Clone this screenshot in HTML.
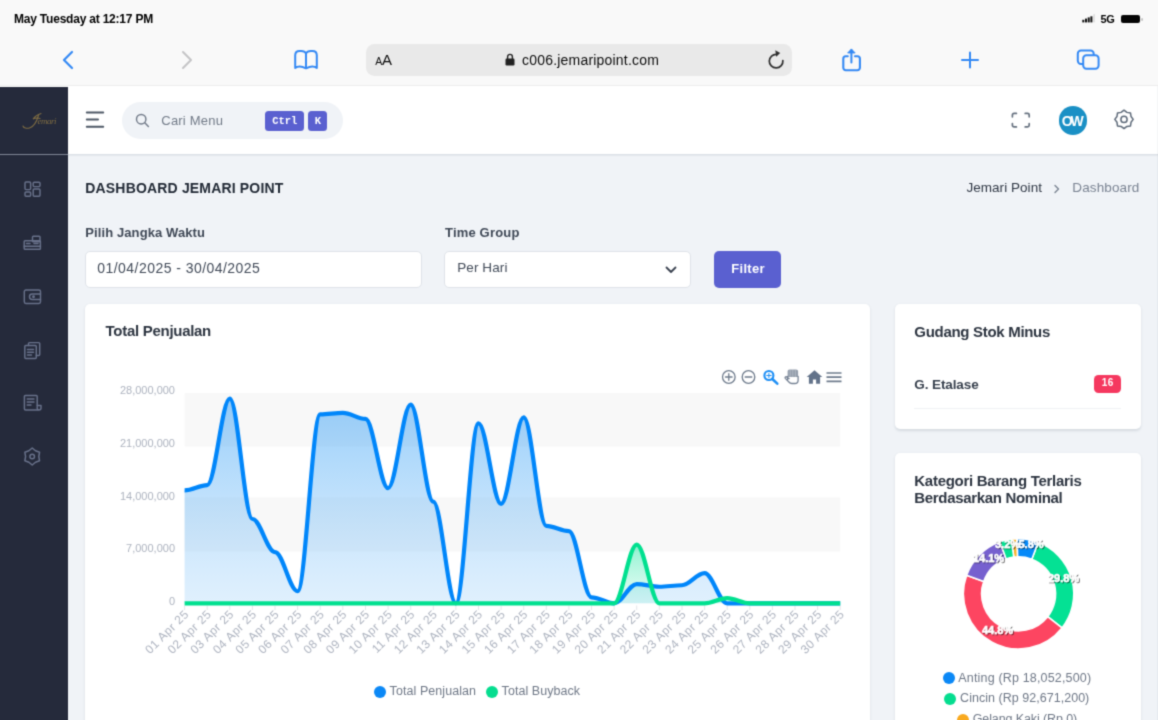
<!DOCTYPE html>
<html lang="id">
<head>
<meta charset="utf-8">
<title>Dashboard Jemari Point</title>
<style>
*{box-sizing:border-box;margin:0;padding:0}
html,body{width:1158px;height:720px;overflow:hidden;background:#f0f3f7;font-family:"Liberation Sans",sans-serif;color:#313a46}
#pg{position:absolute;left:-20px;top:-20px;width:1198px;height:760px;overflow:hidden;background:#f0f3f7;filter:url(#soft)}
#in{position:absolute;left:20px;top:20px;width:1158px;height:720px}
.abs{position:absolute}
.t{position:absolute;white-space:nowrap;line-height:1}
#status{left:-20px;top:-20px;width:1198px;height:105.5px;background:#f9f9f9;border-bottom:1px solid #efefef}
#url{left:365.5px;top:44px;width:426.5px;height:31.800px;border-radius:8.500px;background:#e9e9e9}
#side{left:-20px;top:87px;width:87.8px;height:660px;background:#252a3b}
#sideline{left:-20px;top:153.6px;width:87.8px;height:1.4px;background:#7e8494}
#head{left:-20px;top:85.5px;width:1198px;height:68.5px;background:#fff;box-shadow:0 1px 2px rgba(120,130,150,.25)}
#search{left:122px;top:102px;width:221px;height:37px;border-radius:18.5px;background:#f0f3f7}
.kbd{position:absolute;top:110.5px;height:20px;border-radius:3.5px;background:#5a60d0;color:#fff;font-family:"Liberation Mono",monospace;font-weight:700;font-size:10.5px;line-height:20px;text-align:center}
.inp{position:absolute;background:#fff;border:1px solid #dfe3e9;border-radius:5px}
.card{position:absolute;background:#fff;border-radius:5px;box-shadow:0 1.5px 2.5px rgba(125,135,150,.22)}
#btn{left:713.7px;top:251px;width:67.7px;height:37px;border-radius:5px;background:#5a60d0}
#avatar{left:1058.6px;top:105.8px;width:28.8px;height:28.8px;border-radius:50%;background:#1a90c5}
#badge{left:1093.7px;top:374.8px;width:27px;height:17.8px;border-radius:4.5px;background:#f5385f}
</style>
</head>
<body><svg width="0" height="0" style="position:absolute"><defs><filter id="soft" x="0" y="0" width="100%" height="100%" color-interpolation-filters="sRGB"><feConvolveMatrix order="3" kernelMatrix="0.02768 0.11101 0.02768 0.11101 0.44521 0.11101 0.02768 0.11101 0.02768" divisor="1" edgeMode="duplicate" preserveAlpha="true"/></filter></defs></svg><div id="pg"><div id="in">
<!-- browser chrome -->
<div class="abs" id="status"></div>
<div class="t" style="left:14px;top:12.8px;font-size:12px;font-weight:700;color:#000;letter-spacing:-0.21px">May Tuesday at 12:17 PM</div>
<div class="t" style="left:1100.4px;top:14.3px;font-size:11px;font-weight:700;color:#000;letter-spacing:-0.3px">5G</div>
<div class="abs" style="left:1120.5px;top:15.3px;width:19.4px;height:7.4px;border-radius:2px;background:#050505"></div>
<div class="abs" style="left:1141.3px;top:17.5px;width:1.6px;height:3px;border-radius:1px;background:#c4c4c4"></div>
<svg class="abs" style="left:1082px;top:13px" width="14" height="11" viewBox="0 0 14 11"><rect x="0.3" y="6.800" width="2" height="2.600" fill="#111"/><rect x="3" y="5.600" width="2" height="3.800" fill="#111"/><rect x="5.700" y="4.400" width="2" height="5" fill="#111"/><rect x="8.400" y="3.300" width="2" height="6.100" fill="#111"/><rect x="11.400" y="1.200" width="1.400" height="8.200" fill="#d8d8d8"/></svg>

<div class="abs" id="url"></div>
<div class="t" style="left:375.2px;top:52px;font-size:15px;color:#0c0c0c;letter-spacing:-0.3px"><span style="font-size:10.5px">A</span><span style="font-size:15px">A</span></div>
<svg class="abs" style="left:505px;top:53px" width="10" height="13" viewBox="0 0 10 13"><rect x="0.5" y="5.5" width="9" height="7" rx="1.2" fill="#222"/><path d="M2.6 6V3.8a2.4 2.4 0 0 1 4.8 0V6" fill="none" stroke="#222" stroke-width="1.4"/></svg>
<div class="t" style="left:522px;top:52.5px;font-size:14px;color:#0c0c0c;letter-spacing:0.2px">c006.jemaripoint.com</div>
<svg class="abs" style="left:767px;top:49px" width="20" height="22" viewBox="0 0 20 22"><path d="M15.870 11.500A6.800 6.800 0 1 1 9.690 5.330" fill="none" stroke="#2e2e2e" stroke-width="1.700" stroke-linecap="round"/><path d="M8.300 1.200l4.900 2.900-4 3.700z" fill="#2e2e2e"/></svg>
<!-- toolbar icons -->
<svg class="abs" style="left:61px;top:50px" width="14" height="20" viewBox="0 0 14 20"><path d="M11 2L3 10l8 8" fill="none" stroke="#3489f4" stroke-width="2.200" stroke-linecap="round" stroke-linejoin="round"/></svg>
<svg class="abs" style="left:180px;top:50px" width="14" height="20" viewBox="0 0 14 20"><path d="M3 2l8 8-8 8" fill="none" stroke="#c4c4c6" stroke-width="2" stroke-linecap="round" stroke-linejoin="round"/></svg>
<svg class="abs" style="left:292px;top:48px" width="28" height="24" viewBox="0 0 28 24"><path d="M3.2 20V7.300C3.200 4.300 5 2.900 7.600 2.900H9.200C11.400 2.900 13.200 3.800 14 5.400C14.800 3.800 16.600 2.900 18.800 2.900H20.400C23 2.900 24.800 4.300 24.800 7.300V20M14 5.400V20.300M3.200 20C5.500 18.200 9.500 18 14 20.300C18.500 18 22.500 18.200 24.800 20" fill="none" stroke="#3489f4" stroke-width="2" stroke-linejoin="round" stroke-linecap="round"/></svg>
<svg class="abs" style="left:839px;top:46px" width="26" height="28" viewBox="0 0 26 28"><path d="M8.800 10.300H6.800a2.500 2.500 0 0 0-2.500 2.500V21.800a2.500 2.500 0 0 0 2.500 2.500H18.400a2.500 2.500 0 0 0 2.500-2.500V12.800a2.500 2.500 0 0 0-2.500-2.500H16" fill="none" stroke="#3489f4" stroke-width="2.100" stroke-linecap="round"/><path d="M12.400 16.500V4.200" fill="none" stroke="#3489f4" stroke-width="2" stroke-linecap="round"/><path d="M8.600 7l3.800-4.100 3.800 4.100z" fill="#3489f4" stroke="#3489f4" stroke-width="0.800" stroke-linejoin="round"/></svg>
<svg class="abs" style="left:958.5px;top:49px" width="22" height="22" viewBox="0 0 22 22"><path d="M11 3.400v15.200M3 11h16" fill="none" stroke="#3489f4" stroke-width="2" stroke-linecap="round"/></svg>
<svg class="abs" style="left:1075px;top:48px" width="26" height="26" viewBox="0 0 26 26"><rect x="2.800" y="2.600" width="15.900" height="13.300" rx="3.200" fill="none" stroke="#3489f4" stroke-width="2"/><rect x="8.200" y="7.300" width="15.400" height="13.500" rx="3.200" fill="#f9f9f9" stroke="#3489f4" stroke-width="2"/></svg>

<!-- sidebar -->
<div class="abs" id="head"></div>
<div class="abs" id="side"></div>
<div class="abs" id="sideline"></div>
<svg class="abs" style="left:20px;top:110px" width="40" height="22" viewBox="0 0 40 22"><path d="M21 3.500c-3.500 1-6.500 3.500-8 5.500 2-1 5-1.200 7-0.500M18.500 5.500c-1.500 5-4 11-9 12.500-3 0.900-6-0.300-6.500-2" fill="none" stroke="#9b8145" stroke-width="1.1" stroke-linecap="round" opacity="0.75"/><text x="17.500" y="13.800" font-family="Liberation Serif, serif" font-style="italic" font-size="9" fill="#9b8145" opacity="0.75" letter-spacing="-0.5">emari</text></svg>

<svg class="abs" style="left:23px;top:180px" width="19" height="18" viewBox="0 0 19 18" stroke="#68718a" stroke-width="1.45" fill="none" stroke-linejoin="round" stroke-linecap="round"><rect x="2" y="2" width="5.600" height="7.600" rx="1"/><rect x="10.200" y="2.200" width="6.800" height="4.400" rx="1"/><rect x="2" y="12" width="5.600" height="4.200" rx="1"/><rect x="10.200" y="9" width="6.800" height="7.200" rx="1"/></svg>
<svg class="abs" style="left:23px;top:234px" width="19" height="18" viewBox="0 0 19 18" stroke="#68718a" stroke-width="1.45" fill="none" stroke-linejoin="round" stroke-linecap="round"><rect x="9.500" y="2.200" width="7.500" height="5.500" rx="0.800"/><rect x="1.200" y="6.800" width="16.200" height="8.400" rx="0.800"/><path d="M1.200 12.200h16.200M3.500 9.500h3.500M11 9.500h4"/></svg>
<svg class="abs" style="left:23px;top:288px" width="19" height="18" viewBox="0 0 19 18" stroke="#68718a" stroke-width="1.45" fill="none" stroke-linejoin="round" stroke-linecap="round"><rect x="1.300" y="2" width="16.200" height="13.400" rx="1.600"/><path d="M17.500 6H9.200a2.700 2.700 0 0 0 0 5.400h8.300"/><circle cx="10.500" cy="8.700" r="0.700" fill="#68718a"/></svg>
<svg class="abs" style="left:23px;top:341px" width="19" height="19" viewBox="0 0 19 19" stroke="#68718a" stroke-width="1.45" fill="none" stroke-linejoin="round" stroke-linecap="round"><path d="M5.500 4.500V2.600a1 1 0 0 1 1-1h9.200a1 1 0 0 1 1 1v10.800a1 1 0 0 1-1 1h-2.400"/><rect x="1.800" y="4.500" width="11.500" height="13" rx="1"/><path d="M4.500 8.500h6M4.500 11.200h6M4.500 13.900h4"/></svg>
<svg class="abs" style="left:23px;top:394px" width="20" height="18" viewBox="0 0 20 18" stroke="#68718a" stroke-width="1.45" fill="none" stroke-linejoin="round" stroke-linecap="round"><path d="M14.200 11.500V2.500a1 1 0 0 0-1-1H2.400a1 1 0 0 0-1 1v12.300a1.200 1.200 0 0 0 1.200 1.200H16a2 2 0 0 0 2-2v-2.500h-4M14.200 11.500v2.300a1.900 1.900 0 0 0 1.800 2.200"/><path d="M4.200 5h6.800M4.200 8h6.800M4.200 11h3.800"/></svg>
<svg class="abs" style="left:23px;top:447px" width="19" height="19" viewBox="0 0 19 19" stroke="#68718a" stroke-width="1.45" fill="none" stroke-linejoin="round" stroke-linecap="round"><path d="M9.20 1.00 L12.50 3.78 L16.56 5.25 L15.80 9.50 L16.56 13.75 L12.50 15.22 L9.20 18.00 L5.90 15.22 L1.84 13.75 L2.60 9.50 L1.84 5.25 L5.90 3.78Z"/><circle cx="9.2" cy="9.5" r="2.3"/></svg>


<!-- header -->
<svg class="abs" style="left:85px;top:111px" width="22" height="18" viewBox="0 0 22 18"><path d="M1.8 1.600h16.400M1.800 8.600h11.200M1.800 15.700h16.400" fill="none" stroke="#4c5765" stroke-width="2" stroke-linecap="round"/></svg>
<div class="abs" id="search"></div>
<svg class="abs" style="left:135px;top:113px" width="15" height="15" viewBox="0 0 15 15"><circle cx="6.200" cy="6.200" r="4.700" fill="none" stroke="#727b89" stroke-width="1.45"/><path d="M9.800 9.800l3.600 3.600" stroke="#727b89" stroke-width="1.45" stroke-linecap="round"/></svg>
<div class="t" style="left:161.3px;top:113.5px;font-size:13px;color:#727b88;letter-spacing:0.2px">Cari Menu</div>
<div class="kbd" style="left:265.3px;width:39px">Ctrl</div>
<div class="kbd" style="left:308.4px;width:19px">K</div>
<svg class="abs" style="left:1011px;top:111.500px" width="20" height="17" viewBox="0 0 20 17"><path d="M1.400 4.800V3A1.600 1.600 0 0 1 3 1.400h2.400M14.200 1.400h2.400A1.600 1.600 0 0 1 18.200 3v1.800M18.200 11.500v1.800a1.600 1.600 0 0 1-1.600 1.600h-2.400M5.400 14.900H3a1.600 1.600 0 0 1-1.600-1.600v-1.800" fill="none" stroke="#66717f" stroke-width="1.700" stroke-linecap="round"/></svg>
<div class="abs" id="avatar"></div>
<div class="t" style="left:1061.8px;top:113.9px;font-size:14px;font-weight:700;color:#fff;letter-spacing:-2.3px">OW</div>
<svg class="abs" style="left:1113.7px;top:109.1px" width="20" height="21" viewBox="0 0 20 21"><path d="M10.00 1.20 L12.91 3.38 L16.51 3.89 L17.02 7.49 L19.20 10.40 L17.02 13.31 L16.51 16.91 L12.91 17.42 L10.00 19.60 L7.09 17.42 L3.49 16.91 L2.98 13.31 L0.80 10.40 L2.98 7.49 L3.49 3.89 L7.09 3.38Z" fill="none" stroke="#5f6b7a" stroke-width="1.5" stroke-linejoin="round"/><circle cx="10" cy="10.4" r="3.1" fill="none" stroke="#5f6b7a" stroke-width="1.5"/></svg>

<!-- page title / breadcrumb -->
<div class="t" style="left:85.3px;top:180.5px;font-size:14px;font-weight:700;color:#222a36;letter-spacing:0.17px">DASHBOARD JEMARI POINT</div>
<div class="t" style="left:966.4px;top:181.2px;font-size:13.5px;color:#303845;letter-spacing:0.05px">Jemari Point</div>
<svg class="abs" style="left:1053px;top:184px" width="8" height="10" viewBox="0 0 8 10"><path d="M2 1.500L5.500 5 2 8.500" fill="none" stroke="#7a8392" stroke-width="1.4" stroke-linecap="round" stroke-linejoin="round"/></svg>
<div class="t" style="left:1072.3px;top:181.2px;font-size:13.5px;color:#7a8392;letter-spacing:0.12px">Dashboard</div>

<!-- filter form -->
<div class="t" style="left:85.3px;top:226.1px;font-size:13px;font-weight:700;color:#3f4856;letter-spacing:0.1px">Pilih Jangka Waktu</div>
<div class="inp" style="left:85px;top:251px;width:337px;height:37px"></div>
<div class="t" style="left:97.3px;top:261.2px;font-size:14px;color:#424b59;letter-spacing:0.45px">01/04/2025 - 30/04/2025</div>
<div class="t" style="left:445px;top:226.1px;font-size:13px;font-weight:700;color:#3f4856;letter-spacing:0.18px">Time Group</div>
<div class="inp" style="left:444px;top:251px;width:247px;height:37px"></div>
<div class="t" style="left:457.2px;top:261.3px;font-size:13.5px;color:#424b59;letter-spacing:0.1px">Per Hari</div>
<svg class="abs" style="left:665px;top:266px" width="12" height="8" viewBox="0 0 12 8"><path d="M1.500 1.500L6 6l4.500-4.500" fill="none" stroke="#3a4250" stroke-width="1.800" stroke-linecap="round" stroke-linejoin="round"/></svg>
<div class="abs" id="btn"></div>
<div class="t" style="left:731.3px;top:261.8px;font-size:13px;font-weight:700;color:#fff;letter-spacing:0.3px">Filter</div>

<!-- cards -->
<div class="card" style="left:85px;top:304px;width:785.2px;height:460px"></div>
<div class="card" style="left:894.5px;top:304px;width:246px;height:124.5px"></div>
<div class="card" style="left:894.5px;top:453px;width:246px;height:310px"></div>
<div class="t" style="left:105.6px;top:323.4px;font-size:15px;font-weight:700;color:#2d3541;letter-spacing:-0.29px">Total Penjualan</div>
<div class="t" style="left:914.3px;top:323.9px;font-size:15px;font-weight:700;color:#2d3541;letter-spacing:-0.3px">Gudang Stok Minus</div>
<div class="t" style="left:914.3px;top:378.4px;font-size:13.5px;font-weight:700;color:#38414e;letter-spacing:-0.1px">G. Etalase</div>
<div class="abs" id="badge"></div>
<div class="t" style="left:1101.8px;top:378.3px;font-size:10px;font-weight:700;color:#fff;letter-spacing:0.5px">16</div>
<div class="abs" style="left:914px;top:408px;width:207px;height:1px;background:#f0f2f5"></div>
<div class="t" style="left:914.3px;top:472.7px;font-size:15px;font-weight:700;color:#2d3541;letter-spacing:-0.28px">Kategori Barang Terlaris</div>
<div class="t" style="left:914.3px;top:490.1px;font-size:15px;font-weight:700;color:#2d3541;letter-spacing:-0.32px">Berdasarkan Nominal</div>


<svg class="abs" style="left:0;top:0" width="1158" height="720" viewBox="0 0 1158 720">
<defs>
<linearGradient id="gb" x1="0" y1="0" x2="0" y2="1"><stop offset="0" stop-color="#2296f5" stop-opacity="0.47"/><stop offset="1" stop-color="#8cc8f8" stop-opacity="0.27"/></linearGradient>
<linearGradient id="gg" x1="0" y1="0" x2="0" y2="1"><stop offset="0" stop-color="#00e396" stop-opacity="0.45"/><stop offset="1" stop-color="#7ff0ca" stop-opacity="0.2"/></linearGradient>
</defs>
<rect x="184.6" y="393.1" width="655.6" height="53.5" fill="#f8f8f8"/>
<rect x="184.6" y="497.4" width="655.6" height="54.2" fill="#f8f8f8"/>

<rect x="184.1" y="605.5" width="1" height="4.500" fill="#e4e6ea"/>
<rect x="206.7" y="605.5" width="1" height="4.500" fill="#e4e6ea"/>
<rect x="229.3" y="605.5" width="1" height="4.500" fill="#e4e6ea"/>
<rect x="251.9" y="605.5" width="1" height="4.500" fill="#e4e6ea"/>
<rect x="274.5" y="605.5" width="1" height="4.500" fill="#e4e6ea"/>
<rect x="297.1" y="605.5" width="1" height="4.500" fill="#e4e6ea"/>
<rect x="319.7" y="605.5" width="1" height="4.500" fill="#e4e6ea"/>
<rect x="342.3" y="605.5" width="1" height="4.500" fill="#e4e6ea"/>
<rect x="365.0" y="605.5" width="1" height="4.500" fill="#e4e6ea"/>
<rect x="387.6" y="605.5" width="1" height="4.500" fill="#e4e6ea"/>
<rect x="410.2" y="605.5" width="1" height="4.500" fill="#e4e6ea"/>
<rect x="432.8" y="605.5" width="1" height="4.500" fill="#e4e6ea"/>
<rect x="455.4" y="605.5" width="1" height="4.500" fill="#e4e6ea"/>
<rect x="478.0" y="605.5" width="1" height="4.500" fill="#e4e6ea"/>
<rect x="500.6" y="605.5" width="1" height="4.500" fill="#e4e6ea"/>
<rect x="523.2" y="605.5" width="1" height="4.500" fill="#e4e6ea"/>
<rect x="545.8" y="605.5" width="1" height="4.500" fill="#e4e6ea"/>
<rect x="568.4" y="605.5" width="1" height="4.500" fill="#e4e6ea"/>
<rect x="591.0" y="605.5" width="1" height="4.500" fill="#e4e6ea"/>
<rect x="613.6" y="605.5" width="1" height="4.500" fill="#e4e6ea"/>
<rect x="636.2" y="605.5" width="1" height="4.500" fill="#e4e6ea"/>
<rect x="658.8" y="605.5" width="1" height="4.500" fill="#e4e6ea"/>
<rect x="681.5" y="605.5" width="1" height="4.500" fill="#e4e6ea"/>
<rect x="704.1" y="605.5" width="1" height="4.500" fill="#e4e6ea"/>
<rect x="726.7" y="605.5" width="1" height="4.500" fill="#e4e6ea"/>
<rect x="749.3" y="605.5" width="1" height="4.500" fill="#e4e6ea"/>
<rect x="771.9" y="605.5" width="1" height="4.500" fill="#e4e6ea"/>
<rect x="794.5" y="605.5" width="1" height="4.500" fill="#e4e6ea"/>
<rect x="817.1" y="605.5" width="1" height="4.500" fill="#e4e6ea"/>
<rect x="839.7" y="605.5" width="1" height="4.500" fill="#e4e6ea"/>

<path d="M184.60 490.42 C192.51 490.42 199.29 485.16 207.21 485.16 C215.12 485.16 221.90 398.62 229.81 398.62 C237.73 398.62 244.51 519.02 252.42 519.02 C260.33 519.02 267.12 552.13 275.03 552.13 C282.94 552.13 289.72 591.26 297.63 591.26 C305.55 591.26 312.33 414.42 320.24 414.42 C328.15 414.42 334.94 412.92 342.85 412.92 C350.76 412.92 357.54 418.94 365.46 418.94 C373.37 418.94 380.15 488.17 388.06 488.17 C395.97 488.17 402.76 404.64 410.67 404.64 C418.58 404.64 425.36 501.71 433.28 501.71 C441.19 501.71 447.97 603.30 455.88 603.30 C463.80 603.30 470.58 423.45 478.49 423.45 C486.40 423.45 493.18 503.97 501.10 503.97 C509.01 503.97 515.79 417.43 523.70 417.43 C531.62 417.43 538.40 525.79 546.31 525.79 C554.22 525.79 561.00 531.06 568.92 531.06 C576.83 531.06 583.61 597.28 591.52 597.28 C599.44 597.28 606.22 603.30 614.13 603.30 C622.04 603.30 628.83 584.04 636.74 584.04 C644.65 584.04 651.43 586.75 659.34 586.75 C667.26 586.75 674.04 585.24 681.95 585.24 C689.86 585.24 696.65 573.20 704.56 573.20 C712.47 573.20 719.25 603.30 727.17 603.30 C735.08 603.30 741.86 603.30 749.77 603.30 C757.68 603.30 764.47 603.30 772.38 603.30 C780.29 603.30 787.07 603.30 794.99 603.30 C802.90 603.30 809.68 603.30 817.59 603.30 C825.51 603.30 832.29 603.30 840.20 603.30 L840.20 603.30 L184.60 603.30 Z" fill="url(#gb)"/>
<path d="M184.60 603.30 C192.51 603.30 199.29 603.30 207.21 603.30 C215.12 603.30 221.90 603.30 229.81 603.30 C237.73 603.30 244.51 603.30 252.42 603.30 C260.33 603.30 267.12 603.30 275.03 603.30 C282.94 603.30 289.72 603.30 297.63 603.30 C305.55 603.30 312.33 603.30 320.24 603.30 C328.15 603.30 334.94 603.30 342.85 603.30 C350.76 603.30 357.54 603.30 365.46 603.30 C373.37 603.30 380.15 603.30 388.06 603.30 C395.97 603.30 402.76 603.30 410.67 603.30 C418.58 603.30 425.36 603.30 433.28 603.30 C441.19 603.30 447.97 603.30 455.88 603.30 C463.80 603.30 470.58 603.30 478.49 603.30 C486.40 603.30 493.18 603.30 501.10 603.30 C509.01 603.30 515.79 603.30 523.70 603.30 C531.62 603.30 538.40 603.30 546.31 603.30 C554.22 603.30 561.00 603.30 568.92 603.30 C576.83 603.30 583.61 603.30 591.52 603.30 C599.44 603.30 606.22 603.30 614.13 603.30 C622.04 603.30 628.83 544.61 636.74 544.61 C644.65 544.61 651.43 603.30 659.34 603.30 C667.26 603.30 674.04 603.30 681.95 603.30 C689.86 603.30 696.65 603.30 704.56 603.30 C712.47 603.30 719.25 598.03 727.17 598.03 C735.08 598.03 741.86 603.30 749.77 603.30 C757.68 603.30 764.47 603.30 772.38 603.30 C780.29 603.30 787.07 603.30 794.99 603.30 C802.90 603.30 809.68 603.30 817.59 603.30 C825.51 603.30 832.29 603.30 840.20 603.30 L840.20 603.30 L184.60 603.30 Z" fill="url(#gg)"/>
<path d="M184.60 490.42 C192.51 490.42 199.29 485.16 207.21 485.16 C215.12 485.16 221.90 398.62 229.81 398.62 C237.73 398.62 244.51 519.02 252.42 519.02 C260.33 519.02 267.12 552.13 275.03 552.13 C282.94 552.13 289.72 591.26 297.63 591.26 C305.55 591.26 312.33 414.42 320.24 414.42 C328.15 414.42 334.94 412.92 342.85 412.92 C350.76 412.92 357.54 418.94 365.46 418.94 C373.37 418.94 380.15 488.17 388.06 488.17 C395.97 488.17 402.76 404.64 410.67 404.64 C418.58 404.64 425.36 501.71 433.28 501.71 C441.19 501.71 447.97 603.30 455.88 603.30 C463.80 603.30 470.58 423.45 478.49 423.45 C486.40 423.45 493.18 503.97 501.10 503.97 C509.01 503.97 515.79 417.43 523.70 417.43 C531.62 417.43 538.40 525.79 546.31 525.79 C554.22 525.79 561.00 531.06 568.92 531.06 C576.83 531.06 583.61 597.28 591.52 597.28 C599.44 597.28 606.22 603.30 614.13 603.30 C622.04 603.30 628.83 584.04 636.74 584.04 C644.65 584.04 651.43 586.75 659.34 586.75 C667.26 586.75 674.04 585.24 681.95 585.24 C689.86 585.24 696.65 573.20 704.56 573.20 C712.47 573.20 719.25 603.30 727.17 603.30 C735.08 603.30 741.86 603.30 749.77 603.30 C757.68 603.30 764.47 603.30 772.38 603.30 C780.29 603.30 787.07 603.30 794.99 603.30 C802.90 603.30 809.68 603.30 817.59 603.30 C825.51 603.30 832.29 603.30 840.20 603.30" fill="none" stroke="#0086fa" stroke-width="4.2" stroke-linecap="butt" stroke-linejoin="round"/>
<path d="M184.60 603.30 C192.51 603.30 199.29 603.30 207.21 603.30 C215.12 603.30 221.90 603.30 229.81 603.30 C237.73 603.30 244.51 603.30 252.42 603.30 C260.33 603.30 267.12 603.30 275.03 603.30 C282.94 603.30 289.72 603.30 297.63 603.30 C305.55 603.30 312.33 603.30 320.24 603.30 C328.15 603.30 334.94 603.30 342.85 603.30 C350.76 603.30 357.54 603.30 365.46 603.30 C373.37 603.30 380.15 603.30 388.06 603.30 C395.97 603.30 402.76 603.30 410.67 603.30 C418.58 603.30 425.36 603.30 433.28 603.30 C441.19 603.30 447.97 603.30 455.88 603.30 C463.80 603.30 470.58 603.30 478.49 603.30 C486.40 603.30 493.18 603.30 501.10 603.30 C509.01 603.30 515.79 603.30 523.70 603.30 C531.62 603.30 538.40 603.30 546.31 603.30 C554.22 603.30 561.00 603.30 568.92 603.30 C576.83 603.30 583.61 603.30 591.52 603.30 C599.44 603.30 606.22 603.30 614.13 603.30 C622.04 603.30 628.83 544.61 636.74 544.61 C644.65 544.61 651.43 603.30 659.34 603.30 C667.26 603.30 674.04 603.30 681.95 603.30 C689.86 603.30 696.65 603.30 704.56 603.30 C712.47 603.30 719.25 598.03 727.17 598.03 C735.08 598.03 741.86 603.30 749.77 603.30 C757.68 603.30 764.47 603.30 772.38 603.30 C780.29 603.30 787.07 603.30 794.99 603.30 C802.90 603.30 809.68 603.30 817.59 603.30 C825.51 603.30 832.29 603.30 840.20 603.30" fill="none" stroke="#00e08f" stroke-width="4.2" stroke-linecap="butt" stroke-linejoin="round"/>
<g font-family="Liberation Sans, sans-serif" font-size="11" fill="#adb3bf">
<text x="175" y="394.2" text-anchor="end">28,000,000</text>
<text x="175" y="446.9" text-anchor="end">21,000,000</text>
<text x="175" y="499.6" text-anchor="end">14,000,000</text>
<text x="175" y="552.2" text-anchor="end">7,000,000</text>
<text x="175" y="604.9" text-anchor="end">0</text>

</g>
<g font-family="Liberation Sans, sans-serif" font-size="12" letter-spacing="0.5" fill="#aeb4c0">
<text transform="translate(183.8 609.3) rotate(-45)" text-anchor="end" x="0" y="8">01 Apr 25</text>
<text transform="translate(206.4 609.3) rotate(-45)" text-anchor="end" x="0" y="8">02 Apr 25</text>
<text transform="translate(229.0 609.3) rotate(-45)" text-anchor="end" x="0" y="8">03 Apr 25</text>
<text transform="translate(251.6 609.3) rotate(-45)" text-anchor="end" x="0" y="8">04 Apr 25</text>
<text transform="translate(274.2 609.3) rotate(-45)" text-anchor="end" x="0" y="8">05 Apr 25</text>
<text transform="translate(296.8 609.3) rotate(-45)" text-anchor="end" x="0" y="8">06 Apr 25</text>
<text transform="translate(319.4 609.3) rotate(-45)" text-anchor="end" x="0" y="8">07 Apr 25</text>
<text transform="translate(342.0 609.3) rotate(-45)" text-anchor="end" x="0" y="8">08 Apr 25</text>
<text transform="translate(364.7 609.3) rotate(-45)" text-anchor="end" x="0" y="8">09 Apr 25</text>
<text transform="translate(387.3 609.3) rotate(-45)" text-anchor="end" x="0" y="8">10 Apr 25</text>
<text transform="translate(409.9 609.3) rotate(-45)" text-anchor="end" x="0" y="8">11 Apr 25</text>
<text transform="translate(432.5 609.3) rotate(-45)" text-anchor="end" x="0" y="8">12 Apr 25</text>
<text transform="translate(455.1 609.3) rotate(-45)" text-anchor="end" x="0" y="8">13 Apr 25</text>
<text transform="translate(477.7 609.3) rotate(-45)" text-anchor="end" x="0" y="8">14 Apr 25</text>
<text transform="translate(500.3 609.3) rotate(-45)" text-anchor="end" x="0" y="8">15 Apr 25</text>
<text transform="translate(522.9 609.3) rotate(-45)" text-anchor="end" x="0" y="8">16 Apr 25</text>
<text transform="translate(545.5 609.3) rotate(-45)" text-anchor="end" x="0" y="8">17 Apr 25</text>
<text transform="translate(568.1 609.3) rotate(-45)" text-anchor="end" x="0" y="8">18 Apr 25</text>
<text transform="translate(590.7 609.3) rotate(-45)" text-anchor="end" x="0" y="8">19 Apr 25</text>
<text transform="translate(613.3 609.3) rotate(-45)" text-anchor="end" x="0" y="8">20 Apr 25</text>
<text transform="translate(635.9 609.3) rotate(-45)" text-anchor="end" x="0" y="8">21 Apr 25</text>
<text transform="translate(658.5 609.3) rotate(-45)" text-anchor="end" x="0" y="8">22 Apr 25</text>
<text transform="translate(681.2 609.3) rotate(-45)" text-anchor="end" x="0" y="8">23 Apr 25</text>
<text transform="translate(703.8 609.3) rotate(-45)" text-anchor="end" x="0" y="8">24 Apr 25</text>
<text transform="translate(726.4 609.3) rotate(-45)" text-anchor="end" x="0" y="8">25 Apr 25</text>
<text transform="translate(749.0 609.3) rotate(-45)" text-anchor="end" x="0" y="8">26 Apr 25</text>
<text transform="translate(771.6 609.3) rotate(-45)" text-anchor="end" x="0" y="8">27 Apr 25</text>
<text transform="translate(794.2 609.3) rotate(-45)" text-anchor="end" x="0" y="8">28 Apr 25</text>
<text transform="translate(816.8 609.3) rotate(-45)" text-anchor="end" x="0" y="8">29 Apr 25</text>
<text transform="translate(839.4 609.3) rotate(-45)" text-anchor="end" x="0" y="8">30 Apr 25</text>

</g>
</svg>


<svg class="abs" style="left:715px;top:365px" width="135" height="24" viewBox="715 365 135 24">
<g fill="none" stroke="#6e7b8c" stroke-width="1.300" stroke-linecap="round"><circle cx="728.800" cy="377" r="6.300"/><path d="M725.500 377h6.600M728.800 373.700v6.600"/><circle cx="748.500" cy="377" r="6.300"/><path d="M745.200 377h6.600"/></g>
<g fill="none" stroke="#1e8ff5" stroke-linecap="round"><circle cx="768.900" cy="375.500" r="4.500" stroke-width="2.100"/><path d="M772.300 379l5 4.600" stroke-width="2.600"/><path d="M766.700 375.500h4.400M768.900 373.300v4.400" stroke-width="1"/></g>
<g stroke-linejoin="round" stroke-linecap="round"><path d="M787.6 377v-5.400c0-1.300.8-2 1.900-2h6.600c1.200 0 2 .800 2 2v5.400z" fill="#7b8798" fill-opacity="0.800" stroke="none"/><path d="M787.6 376.500v3.200M798.100 376.500v3.700c0 2-1.400 3.300-3.300 3.300h-2.900c-1.300 0-2.200-.500-3-1.500l-3.600-3.600c-.700-.800.200-2 1.300-1.500l2.500 1.700" fill="none" stroke="#768294" stroke-width="1.300"/><path d="M790.200 370.500v6M792.800 370v6.500M795.400 370.500v6" fill="none" stroke="#fff" stroke-opacity="0.350" stroke-width="0.700"/></g>
<path d="M814.500 370.300l-7.800 6.700h2.200v6.700h4v-4.300h3.200v4.300h4v-6.700h2.200z" fill="#63738a"/>
<path d="M826.500 373h15M826.500 377.200h15M826.500 381.400h15" stroke="#6e7b8c" stroke-width="1.700" fill="none"/>
</svg>
<!-- chart legend -->
<div class="abs" style="left:374.3px;top:686px;width:12px;height:12px;border-radius:50%;background:#0b88f6"></div>
<div class="t" style="left:389.6px;top:685.3px;font-size:12.5px;color:#6f7887;letter-spacing:0.07px">Total Penjualan</div>
<div class="abs" style="left:486px;top:686px;width:12px;height:12px;border-radius:50%;background:#05dd8f"></div>
<div class="t" style="left:501.6px;top:685.3px;font-size:12.5px;color:#6f7887;letter-spacing:0.05px">Total Buyback</div>

<svg class="abs" style="left:0;top:0" width="1158" height="720" viewBox="0 0 1158 720">
<defs><filter id="ds" x="-30%" y="-30%" width="160%" height="160%"><feDropShadow dx="1" dy="1" stdDeviation="0.5" flood-color="#000" flood-opacity="0.55"/></filter></defs>
<path d="M1011.39 539.07 A55.2 55.2 0 0 1 1017.16 538.62 L1017.63 556.81 A37.0 37.0 0 0 0 1013.77 557.12 Z" fill="#f7b32d" stroke="#fff" stroke-width="1.6"/>
<path d="M1038.29 542.23 A55.2 55.2 0 0 1 1061.98 627.94 L1047.68 616.68 A37.0 37.0 0 0 0 1031.80 559.23 Z" fill="#04e194" stroke="#fff" stroke-width="1.6"/>
<path d="M1061.98 627.94 A55.2 55.2 0 0 1 966.57 575.37 L983.72 581.45 A37.0 37.0 0 0 0 1047.68 616.68 Z" fill="#fd4561" stroke="#fff" stroke-width="1.6"/>
<path d="M966.57 575.37 A55.2 55.2 0 0 1 999.99 541.83 L1006.13 558.97 A37.0 37.0 0 0 0 983.72 581.45 Z" fill="#7660cf" stroke="#fff" stroke-width="1.6"/>
<path d="M999.99 541.83 A55.2 55.2 0 0 1 1011.39 539.07 L1013.77 557.12 A37.0 37.0 0 0 0 1006.13 558.97 Z" fill="#04e194" stroke="#fff" stroke-width="1.6"/>
<path d="M1017.16 538.62 A55.2 55.2 0 0 1 1038.29 542.23 L1031.80 559.23 A37.0 37.0 0 0 0 1017.63 556.81 Z" fill="#0589f8" stroke="#fff" stroke-width="1.6"/>
<g font-family="Liberation Sans, sans-serif" font-size="11" font-weight="700" fill="#fff" stroke="#fff" stroke-width="0.5" text-anchor="middle" filter="url(#ds)">
<text x="1031" y="548">5.8%</text>
<text x="1063.5" y="581.5">29.8%</text>
<text x="997.5" y="634">44.8%</text>
<text x="988.5" y="561.5">14.1%</text>
<text x="1007.5" y="547.5">3.2%</text>
</g></svg>

<div class="abs" style="left:1156.5px;top:86px;width:22px;height:660px;background:rgba(110,120,135,0.06)"></div>
<!-- donut legend -->
<div class="abs" style="left:942.5px;top:672.1px;width:12px;height:12px;border-radius:50%;background:#0b88f6"></div>
<div class="t" style="left:958.3px;top:671.5px;font-size:12.5px;color:#6f7887;letter-spacing:0.17px">Anting (Rp 18,052,500)</div>
<div class="abs" style="left:944px;top:693.3px;width:12px;height:12px;border-radius:50%;background:#05dd8f"></div>
<div class="t" style="left:960.1px;top:692.1px;font-size:12.5px;color:#6f7887;letter-spacing:0.03px">Cincin (Rp 92,671,200)</div>
<div class="abs" style="left:957.2px;top:714.4px;width:12px;height:12px;border-radius:50%;background:#f9a91f"></div>
<div class="t" style="left:972.7px;top:712.7px;font-size:12.5px;color:#6f7887;letter-spacing:-0.1px">Gelang Kaki (Rp 0)</div>
</div></div></body>
</html>
